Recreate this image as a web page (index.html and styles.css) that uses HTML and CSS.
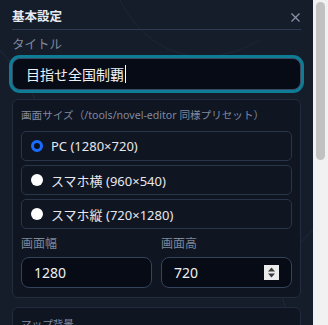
FILE: index.html
```html
<!DOCTYPE html>
<html lang="ja">
<head>
<meta charset="utf-8">
<link rel="stylesheet" href="styles.css">
</head>
<body>
<div class="frame">
  <div class="view">
    <svg class="map" width="313" height="325" viewBox="0 0 313 325" aria-hidden="true">
      <path d="M-10 40 C 40 90, 60 130, 30 200" stroke="#1f2a3c" fill="none" stroke-width="1"/>
      <path d="M120 0 C 150 60, 210 70, 260 40" stroke="#1c2638" fill="none" stroke-width="1"/>
      <path d="M313 230 C 280 260, 270 300, 300 330" stroke="#1f2a3c" fill="none" stroke-width="1"/>
    </svg>
    <div class="panel">
      <div class="head">
        <span class="head-title">基本設定</span>
        <svg class="close" width="9" height="9" viewBox="0 0 9 9"><path d="M0.5 0.5 L8.5 8.5 M8.5 0.5 L0.5 8.5" stroke="#8a94a6" stroke-width="1.2"/></svg>
      </div>
      <div class="label">タイトル</div>
      <div class="title-input">目指せ全国制覇<span class="caret"></span></div>

      <div class="card">
        <div class="card-label">画面サイズ（/tools/novel-editor 同様プリセット）</div>
        <div class="opt"><span class="radio on"></span>PC (1280×720)</div>
        <div class="opt"><span class="radio"></span>スマホ横 (960×540)</div>
        <div class="opt"><span class="radio"></span>スマホ縦 (720×1280)</div>
        <div class="dims">
          <div class="dim">
            <div class="dim-label">画面幅</div>
            <div class="num">1280</div>
          </div>
          <div class="dim">
            <div class="dim-label">画面高</div>
            <div class="num">720<span class="spin"><svg width="9" height="13" viewBox="0 0 9 13"><path d="M4.5 1.5 L8 5.5 H1 Z M4.5 11.5 L8 7.5 H1 Z" fill="#3a3a3a"/></svg></span></div>
          </div>
        </div>
      </div>

      <div class="card card2">
        <div class="card-label">マップ背景</div>
      </div>
    </div>
  </div>
  <div class="scrollbar"><div class="thumb"></div></div>
</div>
</body>
</html>
```
FILE: styles.css
```css
html, body { margin: 0; padding: 0; }
body {
  background: #151d2b;
  font-family: "Noto Sans", "Noto Sans CJK JP", sans-serif;
  color: #e5e7eb;
  overflow: hidden;
}
.frame {
  display: flex;
  width: 328px;
  height: 325px;
  overflow: hidden;
}
.view {
  position: relative;
  flex: 1;
  height: 325px;
  overflow: hidden;
  background: #151d2b;
}
.scrollbar {
  width: 15px;
  height: 325px;
  background: #f1f1f1;
  display: flex;
  justify-content: center;
  padding-top: 2px;
  box-sizing: border-box;
}
.thumb {
  width: 9px;
  height: 158px;
  background: #c1c1c1;
  border-radius: 5px;
}

.map { position: absolute; left: 0; top: 0; }
.panel {
  position: relative;
  padding: 0 12px;
}
.head {
  display: flex;
  justify-content: space-between;
  align-items: center;
  height: 28px;
  padding-top: 1px;
  border-bottom: 1px solid #2d3a52;
}
.head-title { font-weight: 700; font-size: 12.5px; color: #e8ebf0; }
.close { margin-right: 1px; margin-top: 4px; }
.label { font-size: 12.5px; color: #7f8899; margin-top: 6px; line-height: 18px; }
.title-input {
  margin-top: 4px;
  height: 30px;
  border: 1px solid #3b4a63;
  border-radius: 8px;
  background: #070b15;
  box-shadow: 0 0 0 3px #0e7c94;
  display: flex;
  align-items: center;
  padding-left: 13px;
  font-size: 14px;
  color: #eef0f4;
}
.caret { display: inline-block; width: 1px; height: 18px; background: #fff; margin-left: 1px; }

.card {
  margin-top: 9px;
  border: 1px solid #222c3e;
  border-radius: 6px;
  background: #0f1521;
  padding: 7px 8px 9px 8px;
}
.card-label { font-size: 10.6px; color: #8089a0; line-height: 16px; margin-bottom: 8px; }
.opt {
  display: flex;
  align-items: center;
  height: 28px;
  border: 1px solid #2a3549;
  border-radius: 5px;
  margin-top: 4px;
  padding-left: 9px;
  font-size: 13px;
  color: #e6e8ee;
}
.card-label + .opt { margin-top: 0; }
.radio {
  width: 12px; height: 12px;
  border-radius: 50%;
  background: #fff;
  margin-right: 8px;
  box-sizing: border-box;
}
.radio.on { background: #0a0f1e; border: 3px solid #1a6cff; }
.dims { display: flex; gap: 9px; margin-top: 6px; }
.dim { flex: 1; }
.dim-label { font-size: 12px; color: #7f8899; line-height: 18px; }
.num {
  position: relative;
  margin-top: 4px;
  height: 29px;
  border: 1px solid #34425a;
  border-radius: 8px;
  background: #070b15;
  display: flex;
  align-items: center;
  padding-left: 12px;
  font-size: 14px;
  color: #eef0f4;
}
.spin {
  position: absolute;
  right: 12px; top: 7px;
  width: 15px; height: 15px;
  background: #ececec;
  display: flex; align-items: center; justify-content: center;
}
.card2 { padding-top: 8px; height: 200px; }
```
